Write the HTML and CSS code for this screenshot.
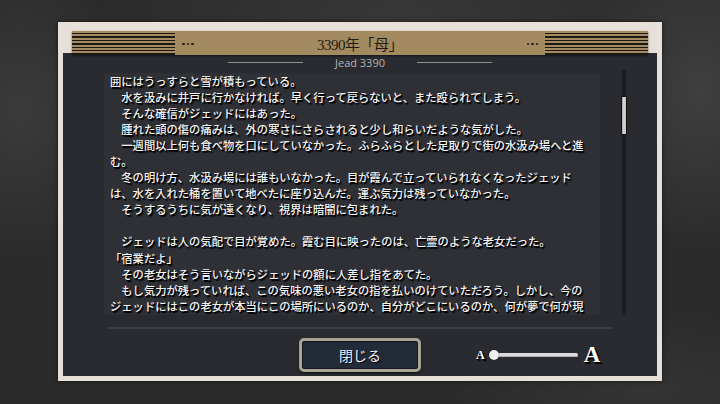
FILE: index.html
```html
<!DOCTYPE html>
<html lang="ja">
<head>
<meta charset="utf-8">
<title>3390年「母」</title>
<link rel="stylesheet" href="styles.css">
</head>
<body>
<div class="frame">
  <div class="header">
    <div class="stripes"></div>
    <div class="dots"><i></i><i></i><i></i></div>
    <div class="title">3390年「母」</div>
    <div class="dots"><i></i><i></i><i></i></div>
    <div class="stripes"></div>
  </div>
  <div class="panel">
    <div class="sub">
      <span class="rule"></span>
      <span class="sub-text">Jead 3390</span>
      <span class="rule"></span>
    </div>
    <div class="content">
      <div class="textbox">
        <p>囲にはうっすらと雪が積もっている。</p>
        <p>　水を汲みに井戸に行かなければ。早く行って戻らないと、また殴られてしまう。</p>
        <p>　そんな確信がジェッドにはあった。</p>
        <p>　腫れた頭の傷の痛みは、外の寒さにさらされると少し和らいだような気がした。</p>
        <p>　一週間以上何も食べ物を口にしていなかった。ふらふらとした足取りで街の水汲み場へと進む。</p>
        <p>　冬の明け方、水汲み場には誰もいなかった。目が霞んで立っていられなくなったジェッドは、水を入れた桶を置いて地べたに座り込んだ。運ぶ気力は残っていなかった。</p>
        <p>　そうするうちに気が遠くなり、視界は暗闇に包まれた。</p>
        <p class="blank">&nbsp;</p>
        <p>　ジェッドは人の気配で目が覚めた。霞む目に映ったのは、亡霊のような老女だった。</p>
        <p>「宿業だよ」</p>
        <p>　その老女はそう言いながらジェッドの額に人差し指をあてた。</p>
        <p>　もし気力が残っていれば、この気味の悪い老女の指を払いのけていただろう。しかし、今のジェッドにはこの老女が本当にこの場所にいるのか、自分がどこにいるのか、何が夢で何が現実なのかもわからなかった。</p>
      </div>
      <div class="scroll"><div class="thumb"></div></div>
    </div>
    <div class="sep"></div>
    <div class="controls">
      <div></div>
      <button class="close">閉じる</button>
      <div class="font-size">
        <span class="a-small">A</span>
        <div class="track"><span class="knob"></span><span class="bar"></span></div>
        <span class="a-big">A</span>
      </div>
    </div>
  </div>
</div>
</body>
</html>
```
FILE: styles.css
```css
html, body {
  margin: 0;
  padding: 0;
}
body {
  width: 720px;
  height: 404px;
  overflow: hidden;
  box-sizing: border-box;
  padding-top: 22px;
  display: flex;
  justify-content: center;
  align-items: flex-start;
  background:
    radial-gradient(ellipse 120px 160px at 700px 90px, rgba(80,80,80,0.55), rgba(80,80,80,0) 100%),
    radial-gradient(ellipse 110px 150px at 20px 110px, rgba(75,75,75,0.5), rgba(75,75,75,0) 100%),
    radial-gradient(ellipse 300px 60px at 400px 10px, rgba(70,70,70,0.45), rgba(70,70,70,0) 100%),
    radial-gradient(ellipse 200px 80px at 650px 390px, rgba(60,60,60,0.5), rgba(60,60,60,0) 100%),
    #2b2b2b;
  font-family: "Liberation Serif", "Noto Sans CJK JP", serif;
}

.frame {
  width: 604px;
  height: 359px;
  box-sizing: border-box;
  padding: 9px 5px 5px;
  background: #e6e0d8;
  box-shadow: 0 0 4px rgba(0,0,0,0.6);
  display: flex;
  flex-direction: column;
}

.header {
  position: relative;
  z-index: 1;
  height: 24px;
  margin: 0 9px -2px;
  background: #a48a60;
  box-shadow: 0 1px 2px rgba(0,0,0,0.55);
  display: flex;
  align-items: center;
}
.stripes {
  width: 103px;
  height: 24px;
  background: repeating-linear-gradient(to bottom, #a48a60 0, #a48a60 1.9px, #1c1812 1.9px, #1c1812 3.4px);
}
.dots {
  display: flex;
  gap: 2px;
  margin: 0 7px;
  padding-top: 2px;
}
.dots i {
  width: 2.5px;
  height: 2.5px;
  border-radius: 50%;
  background: #221d16;
}
.title {
  flex: 1;
  text-align: center;
  color: #1e1a14;
  font-size: 15px;
  letter-spacing: -0.5px;
  padding-top: 1px;
}

.panel {
  flex: 1;
  background: #2a2b30;
  display: flex;
  flex-direction: column;
  padding: 2px 0 4px;
  box-sizing: border-box;
  min-height: 0;
}

.sub {
  height: 15px;
  display: flex;
  justify-content: center;
  align-items: center;
  gap: 32px;
}
.rule {
  width: 75px;
  height: 1.5px;
  background: #8f9092;
}
.sub-text {
  font-family: "Open Sans", "Noto Sans", sans-serif;
  font-size: 11px;
  color: #b3b3b3;
  line-height: 15px;
}

.content {
  height: 245px;
  display: flex;
  align-items: flex-start;
  padding-left: 41px;
  gap: 21px;
}
.textbox {
  margin-top: 3px;
  width: 496px;
  height: 242px;
  box-sizing: border-box;
  padding: 0 10px 0 6px;
  background: #2f3036;
  overflow: hidden;
  color: #f6f6f6;
  font-family: "Noto Sans CJK JP", sans-serif;
  font-weight: 500;
  font-size: 11.3px;
  line-height: 16.05px;
  text-shadow: 1px 1px 0 #000, 1.5px 1.5px 1px #000;
}
.textbox p {
  margin: 0;
}

.scroll {
  width: 6px;
  height: 245px;
  box-sizing: border-box;
  padding-top: 26px;
  background: linear-gradient(to right, transparent 1px, #1d1e22 1px, #1d1e22 5px, transparent 5px);
}
.thumb {
  width: 6px;
  height: 39px;
  box-sizing: border-box;
  border: 1px solid #111;
  border-radius: 1px;
  background: linear-gradient(to right, #9d9d9d, #d6d6d6 40%, #c4c4c4);
}

.sep {
  width: 502px;
  height: 2px;
  margin: 12px auto 0;
  background: #3c414a;
}

.controls {
  margin-top: 9px;
  height: 34px;
  display: grid;
  grid-template-columns: 1fr auto 1fr;
  align-items: center;
}
.close {
  width: 122px;
  height: 34px;
  box-sizing: border-box;
  border: 3px solid #aaa497;
  border-radius: 5px;
  background: #232a38;
  box-shadow: inset 0 0 0 1px #15181e, 0 1px 3px rgba(0,0,0,0.7);
  color: #f2f2f2;
  font-family: "Liberation Serif", "Noto Sans CJK JP", serif;
  font-size: 14px;
  padding: 0;
  text-shadow: 1px 1px 0 #000;
}

.font-size {
  margin-left: 55px;
  display: flex;
  align-items: center;
}
.a-small, .a-big {
  color: #fff;
  font-family: "Liberation Serif", serif;
  font-weight: bold;
  text-shadow: 1px 1px 0 #000, 2px 2px 1px #000;
}
.a-small {
  font-size: 12px;
  margin-right: 4px;
}
.a-big {
  font-size: 23px;
  margin-left: 6px;
}
.track {
  display: flex;
  align-items: center;
}
.knob {
  width: 10px;
  height: 10px;
  border-radius: 50%;
  background: #f2f2f2;
  box-shadow: 0 0 1px #000;
}
.bar {
  width: 80px;
  height: 4px;
  margin-left: -1px;
  border-radius: 2px;
  background: #dcdcdc;
  box-shadow: inset 0 -1px 0 #b5b5b5;
}
```
